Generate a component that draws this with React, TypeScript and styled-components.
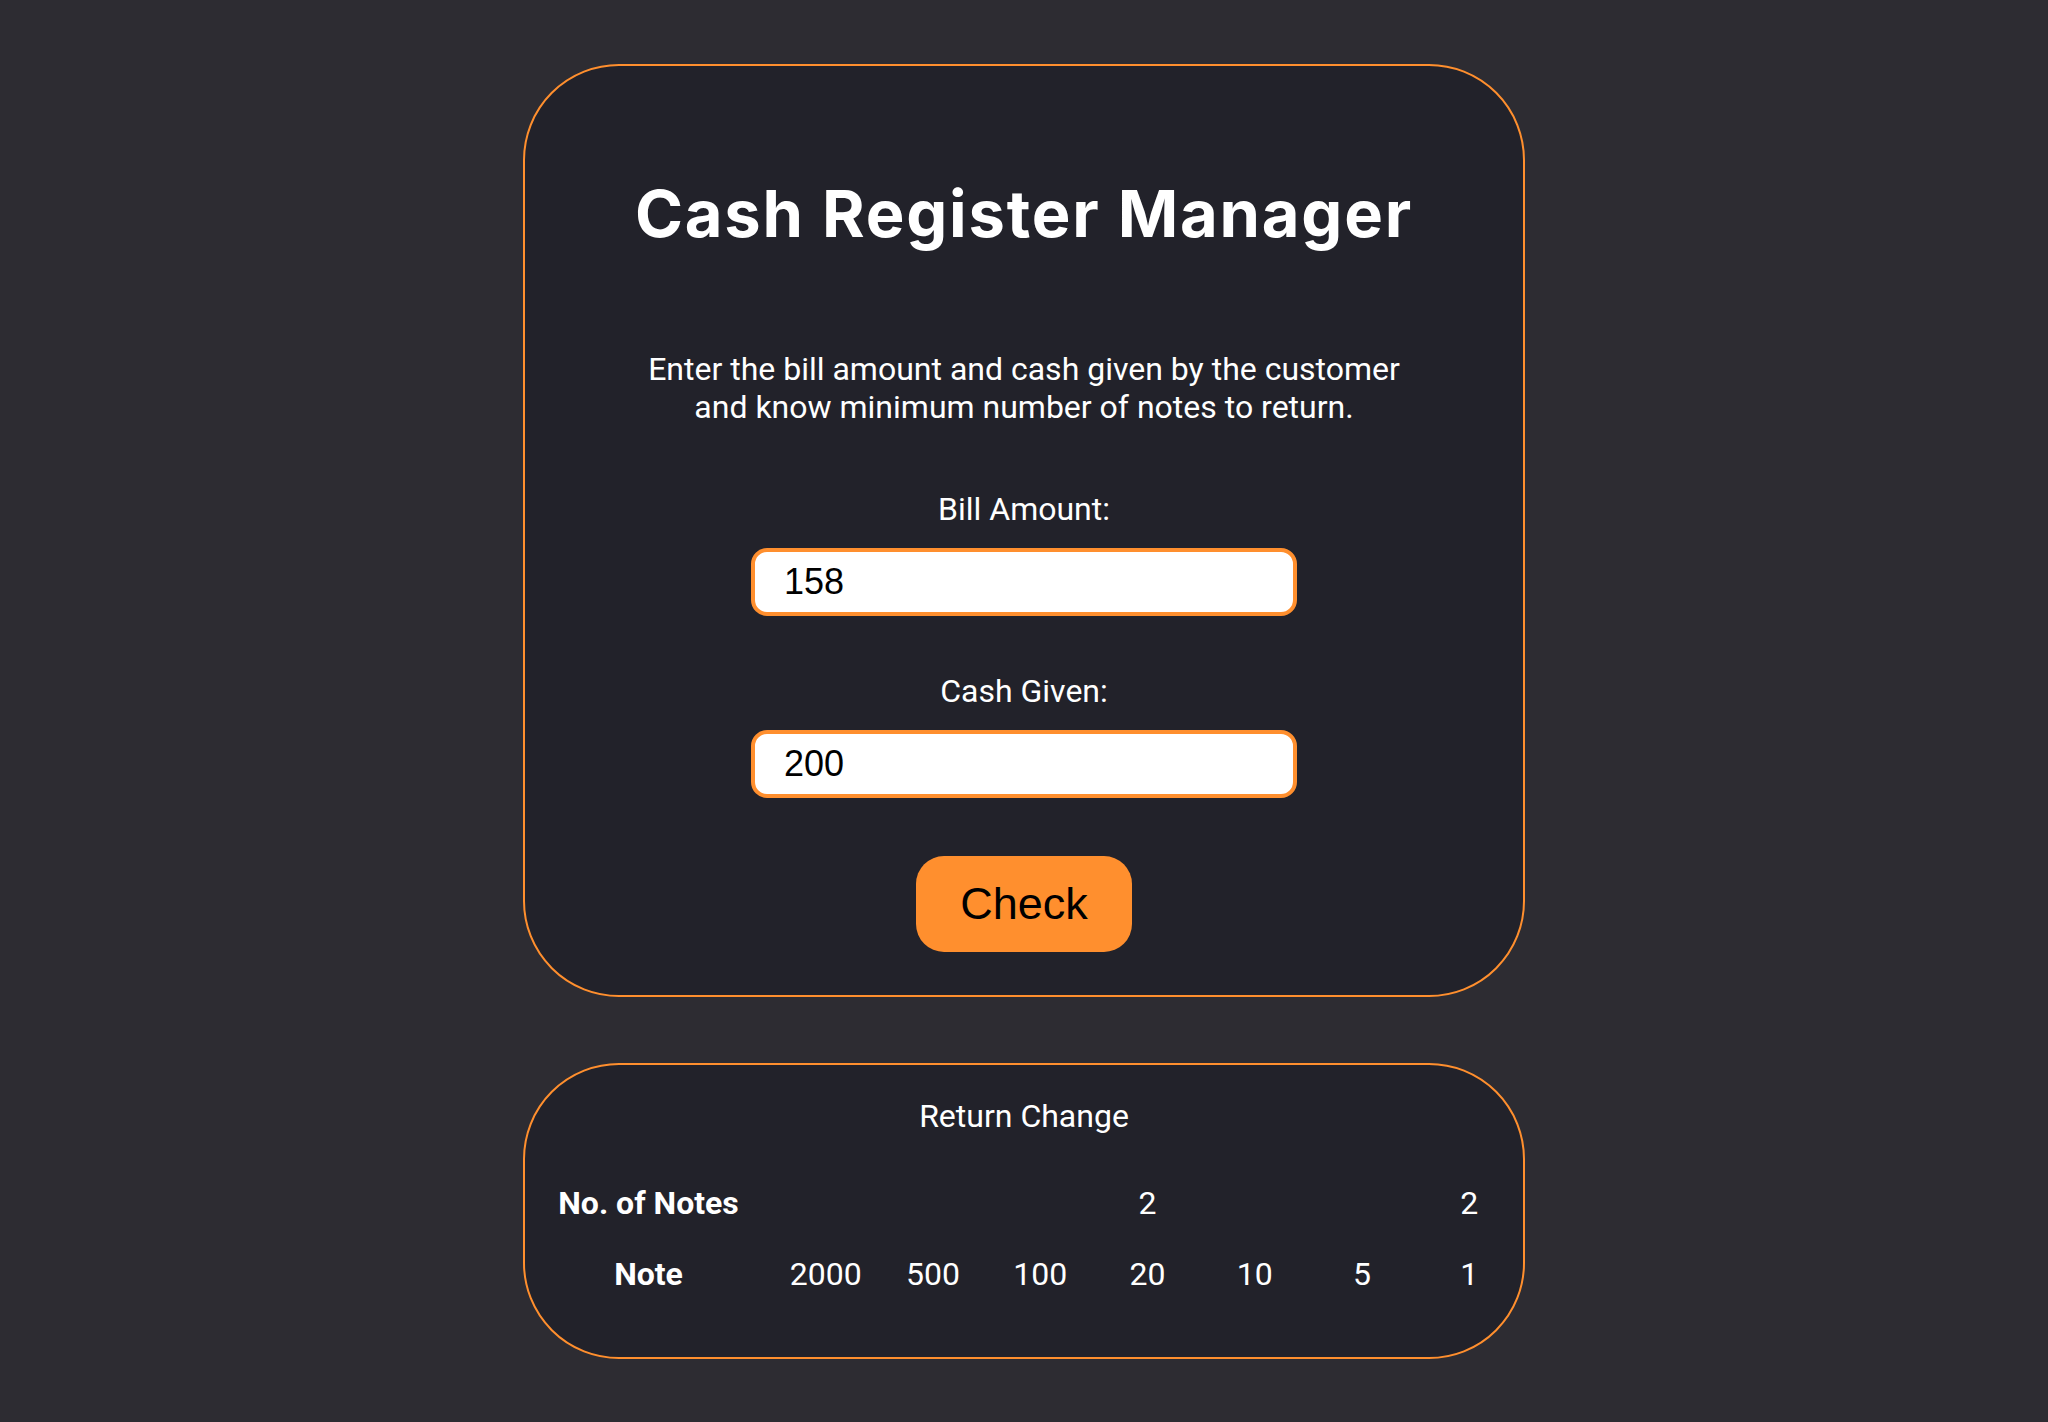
import React from "react";
import styled, { createGlobalStyle } from "styled-components";

const ORANGE = "#ff8f2e";

const Global = createGlobalStyle`
  html, body { margin: 0; padding: 0; }
  body {
    background: #2d2c32;
    font-family: Roboto, "Liberation Sans", sans-serif;
    color: #ffffff;
  }
  * { box-sizing: border-box; }
`;

const Page = styled.main`
  min-height: 1422px;
  display: flex;
  flex-direction: column;
  align-items: center;
  padding-top: 64px;
  gap: 66px;
`;

const Card = styled.section`
  width: 1002px;
  background: #22222a;
  border: 2px solid ${ORANGE};
  border-radius: 96px;
  display: flex;
  flex-direction: column;
  align-items: center;
`;

const MainCard = styled(Card)`
  padding: 109px 0 43px;
`;

const Title = styled.h1`
  margin: 0;
  font-family: Inter, "Open Sans", sans-serif;
  font-weight: 700;
  font-size: 65px;
  letter-spacing: 1.8px;
  line-height: 77px;
  color: #ffffff;
`;

const Intro = styled.p`
  margin: 98px 0 0;
  max-width: 790px;
  text-align: center;
  font-size: 32px;
  line-height: 38px;
`;

const Field = styled.div<{ $top: number }>`
  margin-top: ${(p) => p.$top}px;
  display: flex;
  flex-direction: column;
  align-items: center;
  gap: 20px;
`;

const Label = styled.label`
  font-size: 32px;
  line-height: 38px;
`;

const Input = styled.input`
  width: 546px;
  height: 68px;
  padding: 0 0 0 29px;
  background: #ffffff;
  border: 4px solid ${ORANGE};
  border-radius: 16px;
  font-family: "Liberation Sans", Arial, sans-serif;
  font-size: 36px;
  color: #000000;
  outline: none;
`;

const CheckButton = styled.button`
  margin-top: 58px;
  width: 216px;
  height: 96px;
  border: none;
  border-radius: 28px;
  background: ${ORANGE};
  color: #000000;
  font-family: "Liberation Sans", Arial, sans-serif;
  font-size: 45px;
  cursor: pointer;
`;

const ResultCard = styled(Card)`
  padding: 32px 0 64px;
`;

const Caption = styled.h2`
  margin: 0 0 49px;
  font-weight: 400;
  font-size: 32px;
  line-height: 38px;
`;

const Table = styled.div`
  width: 100%;
  display: grid;
  grid-template-columns: 247px repeat(7, 1fr);
  row-gap: 33px;
`;

const Cell = styled.div<{ $head?: boolean }>`
  text-align: center;
  font-size: 32px;
  line-height: 38px;
  font-weight: ${(p) => (p.$head ? 700 : 400)};
`;

const notes = [2000, 500, 100, 20, 10, 5, 1];
const counts: (number | "")[] = ["", "", "", 2, "", "", 2];

export default function App() {
  return (
    <>
      <Global />
      <Page>
        <MainCard>
          <Title>Cash Register Manager</Title>
          <Intro>
            Enter the bill amount and cash given by the customer and know minimum number of notes to return.
          </Intro>
          <Field $top={64}>
            <Label htmlFor="bill">Bill Amount:</Label>
            <Input id="bill" type="number" defaultValue="158" />
          </Field>
          <Field $top={56}>
            <Label htmlFor="cash">Cash Given:</Label>
            <Input id="cash" type="number" defaultValue="200" />
          </Field>
          <CheckButton>Check</CheckButton>
        </MainCard>
        <ResultCard>
          <Caption>Return Change</Caption>
          <Table>
            <Cell $head>No. of Notes</Cell>
            {counts.map((c, i) => (
              <Cell key={`c${i}`}>{c}</Cell>
            ))}
            <Cell $head>Note</Cell>
            {notes.map((n) => (
              <Cell key={n}>{n}</Cell>
            ))}
          </Table>
        </ResultCard>
      </Page>
    </>
  );
}
